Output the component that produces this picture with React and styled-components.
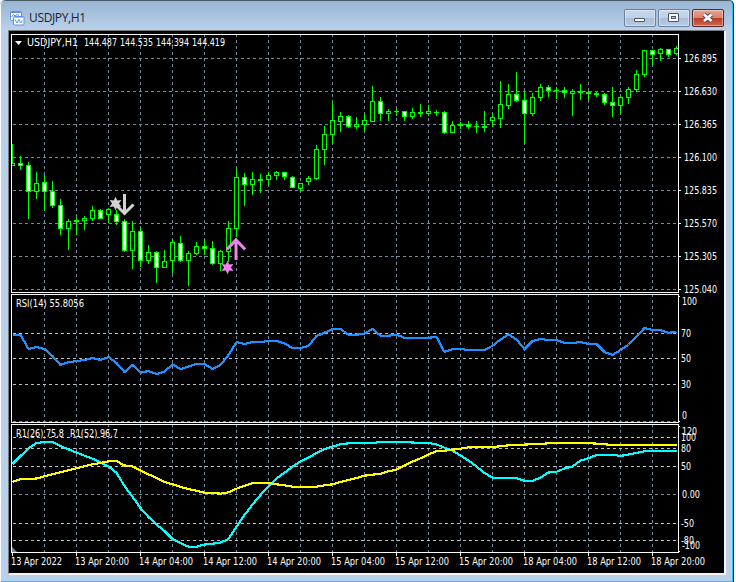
import React from 'react';
import styled, { createGlobalStyle } from 'styled-components';

const LEFT = 9;
const WIDTH = 715;

// [high, body top, body bottom, low, filled], one candle every 8px
const candles = [
    [144, 163, 165, 165, 0], [156, 163, 165, 169, 1], [162, 165, 191, 218, 1], [172, 183, 191, 198, 0],
    [175, 182, 191, 210, 1], [181, 191, 205, 207, 1], [199, 205, 228, 234, 1], [219, 221, 228, 249, 0],
    [217, 220, 221, 234, 0], [216, 218, 220, 229, 0], [206, 210, 218, 220, 0], [209, 210, 218, 218, 1],
    [208, 209, 214, 222, 0], [210, 214, 221, 224, 1], [219, 221, 250, 251, 1], [221, 231, 250, 268, 0],
    [227, 231, 260, 266, 1], [245, 252, 260, 263, 0], [251, 252, 267, 282, 1], [250, 261, 267, 267, 0],
    [240, 242, 260, 273, 0], [236, 243, 260, 261, 1], [251, 253, 260, 285, 0], [242, 246, 253, 254, 0],
    [239, 246, 248, 254, 1], [241, 248, 263, 264, 1], [250, 251, 263, 270, 0], [221, 228, 251, 261, 0],
    [169, 177, 228, 236, 0], [173, 177, 184, 205, 1], [172, 179, 184, 194, 0], [174, 179, 180, 192, 0],
    [172, 175, 179, 185, 0], [171, 172, 175, 179, 0], [172, 172, 176, 179, 1], [176, 177, 187, 187, 1],
    [183, 183, 188, 190, 0], [176, 178, 181, 184, 0], [145, 149, 178, 179, 0], [126, 134, 149, 164, 0],
    [102, 120, 134, 143, 0], [112, 116, 121, 131, 0], [115, 116, 126, 127, 1], [117, 124, 126, 128, 0],
    [113, 120, 124, 130, 0], [86, 101, 121, 121, 0], [97, 101, 113, 120, 1], [109, 111, 113, 120, 0],
    [109, 111, 111, 115, 0], [111, 111, 116, 120, 1], [108, 112, 116, 118, 0], [104, 112, 113, 116, 0],
    [105, 111, 113, 115, 0], [110, 112, 112, 115, 0], [111, 112, 132, 133, 1], [121, 125, 132, 132, 0],
    [122, 124, 125, 128, 0], [121, 124, 126, 128, 1], [121, 126, 126, 132, 0], [111, 126, 127, 131, 0],
    [113, 117, 120, 126, 0], [81, 104, 118, 127, 0], [84, 94, 105, 108, 0], [72, 94, 100, 101, 1],
    [91, 100, 113, 143, 1], [93, 97, 113, 115, 0], [84, 87, 97, 100, 0], [85, 87, 90, 96, 1],
    [87, 90, 90, 98, 0], [87, 90, 92, 97, 1], [89, 91, 93, 115, 0], [84, 91, 92, 99, 0],
    [91, 92, 93, 99, 0], [92, 93, 94, 96, 0], [93, 94, 102, 104, 1], [87, 102, 105, 116, 1],
    [96, 97, 105, 112, 0], [87, 89, 97, 103, 0], [70, 74, 89, 91, 0], [50, 50, 74, 76, 0],
    [50, 50, 54, 64, 1], [48, 49, 53, 60, 0], [49, 49, 54, 56, 1], [46, 48, 53, 54, 0],
];

const rsi = [
    334.7, 334.7, 349, 347, 349, 356, 365, 362.3, 361, 360, 358, 360, 357, 363, 372, 365, 372.7, 371, 374, 371.5,
    364.5, 369, 366.5, 364, 364, 369, 365, 355, 342, 344, 342, 342, 341, 341, 343.5, 348, 348, 346, 336, 332.7,
    329, 329, 334.7, 334.7, 333.5, 329, 335.7, 335.7, 334.7, 337.8, 337.8, 337.8, 337.8, 337, 352, 349, 349, 350, 350, 350,
    345.7, 339.5, 334.5, 339.5, 349, 341, 339, 340, 340, 343, 343, 342, 344, 344, 352, 355, 350, 344.5, 336.5, 328,
    330, 330, 332.8, 332,
];

const fast = [
    464, 456, 448.5, 443, 442, 442, 446, 449.5, 452.5, 455.7, 458.7, 462.5, 466.5, 472.7, 486, 496.7, 508, 517, 524.7, 531,
    539, 543, 546.7, 546.7, 544.5, 543.7, 542.5, 539, 526.7, 515, 504.5, 495, 486.5, 478.5, 472.7, 466.7, 461.5, 457.7, 453, 449,
    446.5, 444.3, 443.3, 443, 443, 443, 442, 442, 442, 442, 442.5, 443, 443, 444.5, 447.7, 450.7, 455.5, 460.5, 466.5, 473,
    477.7, 478, 478, 478, 481, 481, 477.5, 472.5, 471.7, 468.5, 466.5, 460.5, 458.3, 455, 454.7, 454.7, 456, 454.5, 453, 451.2,
    450.7, 450.7, 450.7, 450.7,
];

const slow = [
    482, 479.3, 479, 478.5, 476.3, 474.3, 472.3, 470.3, 468.3, 466.3, 464.3, 463, 461.3, 461, 465.5, 466.3, 470.3, 474.3, 478, 482,
    484.3, 487, 489, 490.7, 492.7, 493, 493.7, 492.3, 488.7, 485.7, 483.3, 482.7, 483, 484.3, 485.3, 486.7, 487, 487, 486.7, 485.3,
    484.3, 482, 480, 478, 475.7, 474.7, 473.7, 471.3, 469.7, 465.3, 461.7, 458.3, 454.3, 451.3, 450.7, 449.7, 448.7, 447.3, 447, 447,
    447, 446.3, 445.3, 445, 444.7, 444, 444, 443.3, 443, 443, 443, 443, 443, 443.7, 444.3, 445, 445, 445, 445, 445,
    445, 445, 445, 445,
];

const prices = ['126.895', '126.630', '126.365', '126.100', '125.835', '125.570', '125.305', '125.040'];

const times = [
    '13 Apr 2022', '13 Apr 20:00', '14 Apr 04:00', '14 Apr 12:00', '14 Apr 20:00', '15 Apr 04:00',
    '15 Apr 12:00', '15 Apr 20:00', '18 Apr 04:00', '18 Apr 12:00', '18 Apr 20:00',
];

const columns = Array.from({ length: 20 }, (_, i) => 44 + i * 32);

const toPoints = (values) => values.map((y, i) => `${12.5 + i * 8},${y}`).join(' ');

const Label = ({ x, y, w, children }) => (
    <LabelText x={x} y={y} textLength={w} lengthAdjust="spacingAndGlyphs">{children}</LabelText>
);

const Pane = ({ top, bottom, height, rows = [], levels = [], children }) => (
    <Plot width={WIDTH} height={height} viewBox={`${LEFT} ${bottom + 1 - height} ${WIDTH} ${height}`}>
        {columns.map((x) => <GridLine key={x} d={`M${x + 0.5} ${top}V${bottom + 1}`} />)}
        {rows.map((y) => <GridLine key={y} d={`M13 ${y + 0.5}H678`} />)}
        {levels.map((y) => <GridLine key={y} $level d={`M13 ${y + 0.5}H678`} />)}
        {children}
        <Frame d={`M11.5 ${top + 0.5}H678.5V${bottom + 0.5}H11.5Z`} />
    </Plot>
);

const Candle = ({ x, data }) => {
    const [high, top, bottom, low, filled] = data;
    const left = Math.max(x - 2, 12);
    const right = Math.min(x + 3, 678);
    return (
        <g>
            <Lime x={x} y={high} width="1" height={low - high + 1} />
            <Lime x={left} y={top} width={right - left} height={bottom - top + 1} />
            {bottom - top > 1 && (
                <Body
                    $filled={filled}
                    x={x - 1}
                    y={top + 1}
                    width={Math.min(3, 678 - x + 1)}
                    height={bottom - top - 1}
                />
            )}
        </g>
    );
};

const Star = ({ x, y, color }) => {
    const points = Array.from({ length: 12 }, (_, i) => {
        const r = i % 2 ? 3.5 : 6.8;
        const a = (i * Math.PI) / 6;
        return `${x + r * Math.sin(a)},${y - r * Math.cos(a)}`;
    }).join(' ');
    return <polygon points={points} fill={color} />;
};

const ChartIcon = () => (
    <svg width="15" height="15" viewBox="0 0 15 15">
        <rect x="0.5" y="0.5" width="11" height="9" rx="1" fill="#fff" stroke="#5b8fee" />
        <path d="M1 1.5h10" stroke="#5b8fee" />
        <path d="M1.5 6l2-2.500 1.500 1.500 2-1.500 2 1" stroke="#5b8fee" fill="none" />
        <rect x="3.5" y="5.5" width="10.5" height="8.5" rx="1" fill="#fff" stroke="#5b8fee" />
        <path d="M4 6.500h9.500" stroke="#9dbdf6" />
        <path d="M5 8.500l2 3.500 2-3.500 1.500 3.500 2-2.500" stroke="#5b8fee" fill="none" />
    </svg>
);

export default function App() {
    return (
        <>
            <GlobalStyle />
            <Window>
                <TitleBar>
                    <ChartIcon />
                    <Title>USDJPY,H1</Title>
                    <Buttons>
                        <WindowButton aria-label="Minimize">
                            <svg width="30" height="16" viewBox="0 0 30 16">
                                <rect x="9.5" y="8.5" width="10" height="3" rx="0.5" fill="#fff" stroke="#4c5566" />
                            </svg>
                        </WindowButton>
                        <WindowButton aria-label="Restore">
                            <svg width="30" height="16" viewBox="0 0 30 16">
                                <rect x="9.5" y="3.5" width="10" height="8" rx="0.5" fill="#fff" stroke="#4c5566" />
                                <rect x="12.5" y="6.5" width="4" height="2" fill="#b6c9df" stroke="#4c5566" />
                            </svg>
                        </WindowButton>
                        <WindowButton $close aria-label="Close">
                            <svg width="30" height="16" viewBox="0 0 30 16">
                                <path d="M11 4.500l7.500 6.500M18.500 4.500l-7.500 6.500" stroke="#4c4656" strokeWidth="4.5" />
                                <path d="M11 4.500l7.500 6.500M18.500 4.500l-7.500 6.500" stroke="#fff" strokeWidth="2.8" />
                            </svg>
                        </WindowButton>
                    </Buttons>
                </TitleBar>

                <Client>
                    {/* price */}
                    <Pane top={34} bottom={292} height={262} rows={prices.map((_, i) => 58 + i * 33)}>
                        {candles.map((data, i) => <Candle key={i} x={12 + i * 8} data={data} />)}
                        <Star x={115.5} y={203.5} color="#d3d3d3" />
                        <Arrow $color="#d3d3d3" d="M124.500 194V213M115.500 204.500L124.500 213.500L133.500 204.500" />
                        <Arrow $color="#ee82ee" d="M236 260V240M226.800 249.500L236 240L245.200 249.500" />
                        <Star x={227.5} y={267.5} color="#ee82ee" />
                        <path d="M15 41H22L18.500 45Z" fill="#fff" />
                        <Label x={27} y={46} w={51}>USDJPY,H1</Label>
                        <Label x={84} y={46} w={33}>144.487</Label>
                        <Label x={120} y={46} w={33}>144.535</Label>
                        <Label x={156} y={46} w={33}>144.394</Label>
                        <Label x={192} y={46} w={33}>144.419</Label>
                        {prices.map((price, i) => (
                            <g key={price}>
                                <Tick d={`M679 ${58.5 + i * 33}h2`} />
                                <Label x={684} y={62 + i * 33} w={33}>{price}</Label>
                            </g>
                        ))}
                    </Pane>

                    {/* RSI */}
                    <Pane top={294} bottom={422} height={130} rows={[421]} levels={[333, 358, 384]}>
                        <Series $color="#1e90ff" points={toPoints(rsi)} />
                        <Label x={16} y={307} w={68}>RSI(14) 55.8056</Label>
                        <Tick d="M679 296.500h1M679 421.500h1" />
                        <Label x={682} y={305} w={15}>100</Label>
                        <Label x={681} y={337} w={10}>70</Label>
                        <Label x={681} y={362} w={10}>50</Label>
                        <Label x={681} y={388} w={10}>30</Label>
                        <Label x={682} y={419} w={5}>0</Label>
                    </Pane>

                    {/* R1 */}
                    <Pane top={424} bottom={552} height={130} rows={[494]} levels={[437, 448, 466, 523, 540]}>
                        <Series $color="#00ffff" points={toPoints(fast)} />
                        <Series $color="#ffff00" points={toPoints(slow)} />
                        <path d="M12 547V552H17Z" fill="#778899" />
                        <Label x={16} y={437} w={48}>R1(26) 75.8</Label>
                        <Label x={70} y={437} w={48}>R1(52) 96.7</Label>
                        <Tick d="M679 426.500h1M679 551.500h1" />
                        <Label x={682} y={435} w={15}>120</Label>
                        <Label x={681} y={441} w={15}>100</Label>
                        <Label x={681} y={452} w={10}>80</Label>
                        <Label x={681} y={470} w={10}>50</Label>
                        <Label x={682} y={498} w={18}>0.00</Label>
                        <Label x={681} y={527} w={13}>-50</Label>
                        <Label x={681} y={544} w={13}>-80</Label>
                        <Label x={682} y={549} w={18}>-100</Label>
                    </Pane>

                    <Plot width={WIDTH} height="20" viewBox={`${LEFT} 553 ${WIDTH} 20`}>
                        {times.map((time, i) => (
                            <g key={time}>
                                <Tick d={`M${12.5 + i * 64} 553v3`} />
                                <Label x={11 + i * 64} y={565} w={i ? 54 : 51}>{time}</Label>
                            </g>
                        ))}
                    </Plot>
                </Client>
            </Window>
        </>
    );
}

const GlobalStyle = createGlobalStyle`
    body {
        margin: 0;
        background: #fff;
        overflow: hidden;
    }
`

const Window = styled.div`
    box-sizing: border-box;
    width: 734px;
    height: 582px;
    padding: 0 6px 0 8px;
    border-right: 1px solid #101010;
    border-top-left-radius: 5px;
    border-top-right-radius: 5px;
    background: linear-gradient(#98b4d2, #b9d1ea 30px);
    box-shadow: inset 1px 0 #fff, inset -1px 0 #35c4ec, inset 0 -1px #35c4dc, inset 0 1px #4b5866;
`

const TitleBar = styled.div`
    display: flex;
    align-items: center;
    height: 30px;
    padding: 6px 0 0 2px;
    box-sizing: border-box;
`

const Title = styled.div`
    margin-left: 4px;
    font: 12px/16px 'Open Sans', 'Noto Sans', sans-serif;
    letter-spacing: -0.35px;
    color: #1c2430;
`

const Buttons = styled.div`
    display: flex;
    gap: 2px;
    margin: 0 3px 0 auto;
`

const WindowButton = styled.button`
    display: flex;
    box-sizing: border-box;
    width: 32px;
    height: 18px;
    padding: 0;
    border: 1px solid ${props => props.$close ? '#53252d' : '#6b7f98'};
    border-radius: 2px;
    background: ${props => props.$close
        ? 'linear-gradient(#e6a493, #d98272 48%, #bc3b22 50%, #c8684f)'
        : 'linear-gradient(#c6d7ea, #bfd1e5 48%, #a6bdd6 50%, #b9cde3)'};
    box-shadow: inset 0 0 0 1px rgba(255, 255, 255, 0.4);
`

const Client = styled.div`
    display: flex;
    flex-direction: column;
    width: ${WIDTH}px;
    border-top: 1px solid #77797c;
    border-left: 1px solid #77797c;
    border-right: 2px solid #f4f4f4;
    border-bottom: 2px solid #f4f4f4;
    background: #000;
`

const Plot = styled.svg`
    display: block;
    flex: none;
    overflow: visible;
`

const LabelText = styled.text`
    font-family: 'DejaVu Sans Condensed', 'DejaVu Sans', sans-serif;
    font-stretch: condensed;
    font-size: 10px;
    fill: #fff;
    white-space: pre;
`

const GridLine = styled.path`
    stroke: ${props => props.$level ? '#c0c0c0' : '#778899'};
    stroke-dasharray: 3 3;
    shape-rendering: crispEdges;
`

const Frame = styled.path`
    fill: none;
    stroke: #fff;
    shape-rendering: crispEdges;
`

const Tick = styled.path`
    stroke: #fff;
    shape-rendering: crispEdges;
`

const Lime = styled.rect`
    fill: #00ff00;
    shape-rendering: crispEdges;
`

const Body = styled.rect`
    fill: ${props => props.$filled ? '#fff' : '#000'};
    shape-rendering: crispEdges;
`

const Series = styled.polyline`
    fill: none;
    stroke: ${props => props.$color};
    stroke-width: 2.2;
    shape-rendering: crispEdges;
`

const Arrow = styled.path`
    fill: none;
    stroke: ${props => props.$color};
    stroke-width: 3;
`
